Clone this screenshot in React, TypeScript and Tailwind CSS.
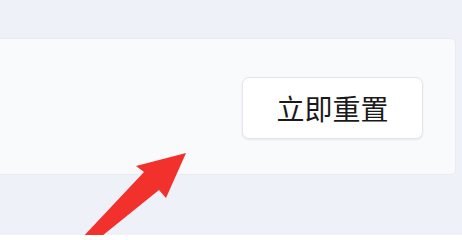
import * as React from "react";

function Arrow() {
  // red annotation arrow pointing up-right towards the button
  return (
    <svg
      className="pointer-events-none absolute left-0 top-0"
      width={462}
      height={235}
      viewBox="0 0 462 235"
    >
      <path
        d="M186 153 L166 198 L159 190 L97 240 L80 240 L144 172 L136 166 Z"
        fill="#f2302c"
      />
    </svg>
  );
}

export default function App() {
  return (
    <div
      className="relative h-[235px] w-[462px] overflow-hidden bg-[#eef1f7] pt-[38px]"
      style={{ fontFamily: '"Noto Sans CJK SC", "Noto Sans", sans-serif' }}
    >
      {/* Card */}
      <div className="ml-[-10px] mr-[6px] flex h-[137px] items-start justify-end rounded-[5px] border border-[#e8ebf0] bg-[#f9fafc] pr-[32px] pt-[38px]">
        <button className="flex h-[62px] w-[181px] items-center justify-center rounded-[7px] border border-[#e3e5ea] bg-white text-[28px] font-normal leading-none text-[#1a1a1a] shadow-[0_1px_2px_rgba(0,0,0,0.08)]">
          立即重置
        </button>
      </div>

      <Arrow />
    </div>
  );
}
